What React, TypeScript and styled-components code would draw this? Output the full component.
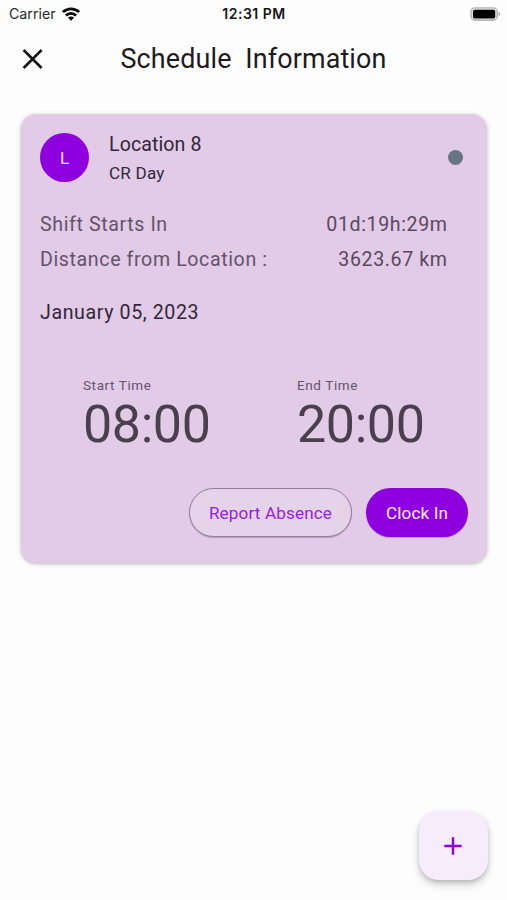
import React from "react";
import styled, { createGlobalStyle } from "styled-components";

const GlobalStyle = createGlobalStyle`
  *, *::before, *::after { box-sizing: border-box; }
  body {
    margin: 0;
    background: #fdfdfd;
    font-family: Roboto, "Noto Sans", sans-serif;
  }
  button { font-family: inherit; padding: 0; border: 0; cursor: pointer; }
`;

const Screen = styled.main`
  display: flex;
  flex-direction: column;
  width: 507px;
  height: 900px;
  overflow: hidden;
  background: #fdfdfd;
`;

const StatusBar = styled.div`
  display: grid;
  grid-template-columns: 1fr auto 1fr;
  align-items: center;
  height: 27px;
  padding: 0 6px 0 9px;
  font-family: Inter, "Liberation Sans", sans-serif;
  font-size: 14.2px;
  line-height: 20px;
  color: #2a2a2a;
`;

const Carrier = styled.div`
  display: flex;
  align-items: center;
  gap: 6px;
`;

const Clock = styled.div`
  margin-right: 2px;
  font-weight: 600;
  font-size: 14px;
  letter-spacing: 0.5px;
  color: #151515;
`;

const BatteryIcon = styled.svg`
  justify-self: end;
`;

const AppBar = styled.header`
  display: flex;
  align-items: center;
  height: 86.5px;
  padding: 0 21px 22px;
  flex: none;
`;

const CloseButton = styled.button`
  display: flex;
  width: 24px;
  height: 24px;
  background: none;
`;

const Title = styled.h1`
  flex: 1;
  margin: 0 24px 0 0;
  text-align: center;
  white-space: pre;
  font-size: 26.9px;
  line-height: 34px;
  letter-spacing: 0.15px;
  font-weight: 400;
  color: #1d1b1e;
`;

const Card = styled.section`
  display: flex;
  flex-direction: column;
  flex: none;
  height: 449.5px;
  margin: 0 20px 0 21px;
  padding: 19px 19px 26px;
  border-radius: 15px;
  background: #e1cbe7;
  box-shadow: 0 1px 4px 1px rgba(0, 0, 0, 0.13), 0 1px 2px rgba(0, 0, 0, 0.12);
`;

const CardHeader = styled.div`
  display: flex;
  align-items: center;
  height: 50px;
  padding-right: 5px;
`;

const Avatar = styled.div`
  display: flex;
  align-items: center;
  justify-content: center;
  width: 49px;
  height: 49px;
  border-radius: 50%;
  background: #8f00df;
  color: #f6e2ff;
  font-size: 17.1px;
`;

const Place = styled.div`
  flex: 1;
  margin-left: 20px;
  padding-top: 2px;
  color: #33263a;
`;

const PlaceName = styled.div`
  font-size: 19.6px;
  line-height: 29px;
  letter-spacing: 0.08px;
`;

const PlaceShift = styled.div`
  font-size: 17.1px;
  line-height: 28px;
  letter-spacing: 0.2px;
`;

const StatusDot = styled.span`
  width: 15px;
  height: 15px;
  border-radius: 50%;
  background: #667580;
`;

const Facts = styled.dl`
  margin: 24px 21px 0 0;
`;

const Fact = styled.div`
  display: flex;
  justify-content: space-between;
  height: 35.5px;
  font-size: 19.6px;
  line-height: 35.5px;
  letter-spacing: 0.61px;
`;

const FactLabel = styled.dt`
  color: #65526b;
`;

const FactValue = styled.dd`
  margin: 0 -0.6px 0 0;
  color: #5b4860;
`;

const ShiftDate = styled.div`
  margin-top: 22px;
  font-size: 19.6px;
  line-height: 26px;
  letter-spacing: 0.61px;
  color: #33263a;
`;

const Times = styled.div`
  display: grid;
  grid-template-columns: 1fr 1fr;
  margin-top: 49px;
`;

const TimeBlock = styled.div`
  padding-left: 43px;
`;

const TimeLabel = styled.div`
  font-size: 13.5px;
  line-height: 20px;
  letter-spacing: 0.6px;
  color: #65526b;
`;

const TimeValue = styled.div`
  font-size: 52px;
  line-height: 59px;
  letter-spacing: -0.4px;
  color: #4b3e4e;
`;

const Actions = styled.div`
  display: flex;
  justify-content: flex-end;
  gap: 14px;
  margin-top: auto;
`;

const ActionButton = styled.button<{ $filled?: boolean; $width: number }>`
  width: ${({ $width }) => $width}px;
  height: 49px;
  border-radius: 25px;
  font-size: 17.1px;
  font-weight: 400;
  letter-spacing: 0.15px;
  box-shadow: 0 1px 1px rgba(70, 20, 90, 0.25);
  ${({ $filled }) =>
    $filled
      ? `background: #8f00df; color: #fbf0ff;`
      : `background: #e5d3ea; color: #971de0; border: 1.5px solid #927b9a;`}
`;

const AddButton = styled.button`
  display: flex;
  align-items: center;
  justify-content: center;
  align-self: flex-end;
  flex: none;
  width: 69px;
  height: 69px;
  margin: auto 19px 20px 0;
  padding-right: 1px;
  border-radius: 20px;
  background: #f7ecfc;
  box-shadow: 0 5px 9px rgba(0, 0, 0, 0.16), 0 2px 4px rgba(0, 0, 0, 0.16);
`;

const facts = [
  { label: "Shift Starts In", value: "01d:19h:29m" },
  { label: "Distance from Location :", value: "3623.67 km" },
];

const times = [
  { label: "Start Time", value: "08:00" },
  { label: "End Time", value: "20:00" },
];

function WifiIcon() {
  return (
    <svg width="18" height="14" viewBox="0 0 18 14" fill="none" stroke="#080808" strokeWidth="2.8">
      <path d="M.9 5.1a11.7 11.7 0 0 1 16.2 0" />
      <path d="M3.9 8.5a7.2 7.2 0 0 1 10.2 0" />
      <path d="M9 13.8 6 10.8a4.1 4.1 0 0 1 6 0z" fill="#080808" stroke="none" />
    </svg>
  );
}

function Battery() {
  return (
    <BatteryIcon width="31" height="14" viewBox="0 0 31 14">
      <rect x="1" y=".9" width="26.2" height="12.4" rx="4" fill="#e0e0e0" stroke="#b4b4b4" strokeWidth="1.4" />
      <rect x="3" y="2.7" width="22.2" height="8.8" rx="1.8" fill="#000" />
      <path d="M28.4 4.7c2.4.7 2.4 3.9 0 4.6z" fill="#b4b4b4" />
    </BatteryIcon>
  );
}

export default function App() {
  return (
    <Screen>
      <GlobalStyle />
      <StatusBar>
        <Carrier>
          Carrier
          <WifiIcon />
        </Carrier>
        <Clock>12:31 PM</Clock>
        <Battery />
      </StatusBar>
      <AppBar>
        <CloseButton aria-label="Close">
          <svg width="24" height="24" viewBox="0 0 24 24" stroke="#151515" strokeWidth="2.6">
            <path d="M2.6 3 20.6 21M20.6 3 2.6 21" />
          </svg>
        </CloseButton>
        <Title>{"Schedule  Information"}</Title>
      </AppBar>
      <Card>
        <CardHeader>
          <Avatar>L</Avatar>
          <Place>
            <PlaceName>Location 8</PlaceName>
            <PlaceShift>CR Day</PlaceShift>
          </Place>
          <StatusDot />
        </CardHeader>
        <Facts>
          {facts.map((fact) => (
            <Fact key={fact.label}>
              <FactLabel>{fact.label}</FactLabel>
              <FactValue>{fact.value}</FactValue>
            </Fact>
          ))}
        </Facts>
        <ShiftDate>January 05, 2023</ShiftDate>
        <Times>
          {times.map((time) => (
            <TimeBlock key={time.label}>
              <TimeLabel>{time.label}</TimeLabel>
              <TimeValue>{time.value}</TimeValue>
            </TimeBlock>
          ))}
        </Times>
        <Actions>
          <ActionButton $width={163}>Report Absence</ActionButton>
          <ActionButton $width={102} $filled>Clock In</ActionButton>
        </Actions>
      </Card>
      <AddButton aria-label="Add">
        <svg width="18" height="18" viewBox="0 0 18 18" stroke="#8f00df" strokeWidth="2.4">
          <path d="M9 .3v17.4M.3 9h17.4" />
        </svg>
      </AddButton>
    </Screen>
  );
}
